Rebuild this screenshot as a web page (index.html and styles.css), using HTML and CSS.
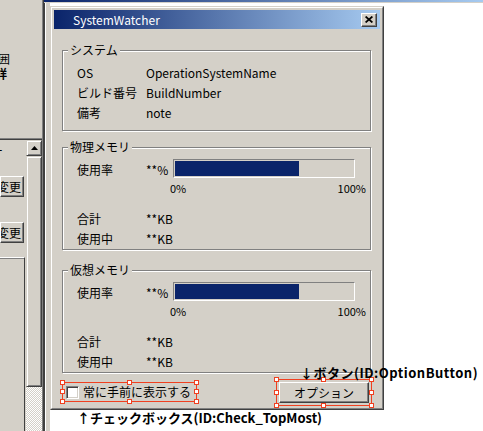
FILE: index.html
```html
<!DOCTYPE html>
<html lang="ja">
<head>
  <meta charset="UTF-8" />
  <title>SystemWatcher - フォームデザイナ</title>
  <link rel="stylesheet" href="styles.css">
</head>
<body>
  <div class="ide">

    <!-- 左のツールウィンドウ（切れている） -->
    <aside class="toolpane">
      <div class="tool-top">
        <div class="tool-glyph">囲</div>
        <div class="tool-glyph strong">詳</div>
      </div>
      <div class="tool-list">
        <div class="list-body">
          <div class="list-head">ー</div>
          <div class="mini-btn">変更</div>
          <div class="mini-btn second">変更</div>
          <div class="list-box"></div>
        </div>
        <div class="vscroll">
          <div class="vs-btn">
            <svg width="7" height="4" viewBox="0 0 7 4"><polygon points="3.5,0 7,4 0,4" fill="#000"/></svg>
          </div>
          <div class="vs-thumb"></div>
          <div class="vs-track"></div>
        </div>
      </div>
    </aside>

    <!-- フォームデザイナ -->
    <section class="designer">
      <div class="designer-caption"></div>
      <div class="designer-body">
        <div class="designer-edge"></div>
        <div class="canvas">

          <div class="dialog">
            <div class="dialog-inner">
              <div class="titlebar">
                <span class="title-text">SystemWatcher</span>
                <div class="close-btn">
                  <svg width="8" height="7" viewBox="0 0 8 7"><path d="M0.6 0.5 L7.4 6.5 M7.4 0.5 L0.6 6.5" stroke="#000" stroke-width="1.7" fill="none"/></svg>
                </div>
              </div>

              <div class="dialog-body">
                <div class="group group-sys">
                  <span class="caption">システム</span>
                  <div class="field"><span class="key">OS</span><span class="val">OperationSystemName</span></div>
                  <div class="field"><span class="key">ビルド番号</span><span class="val">BuildNumber</span></div>
                  <div class="field"><span class="key">備考</span><span class="val">note</span></div>
                </div>

                <div class="group group-mem group-phys">
                  <span class="caption">物理メモリ</span>
                  <div class="meter-row">
                    <span class="key">使用率</span>
                    <span class="val">**%</span>
                    <div class="bar"><div class="fill" style="width: 124px"></div></div>
                  </div>
                  <div class="scale"><span>0%</span><span>100%</span></div>
                  <div class="totals">
                    <div class="field"><span class="key">合計</span><span class="val">**KB</span></div>
                    <div class="field"><span class="key">使用中</span><span class="val">**KB</span></div>
                  </div>
                </div>

                <div class="group group-mem group-virt">
                  <span class="caption">仮想メモリ</span>
                  <div class="meter-row">
                    <span class="key">使用率</span>
                    <span class="val">**%</span>
                    <div class="bar"><div class="fill" style="width: 124px"></div></div>
                  </div>
                  <div class="scale"><span>0%</span><span>100%</span></div>
                  <div class="totals">
                    <div class="field"><span class="key">合計</span><span class="val">**KB</span></div>
                    <div class="field"><span class="key">使用中</span><span class="val">**KB</span></div>
                  </div>
                </div>

                <div class="actions">
                  <div class="check sel">
                    <span class="check-box"></span>
                    <span class="check-text">常に手前に表示する</span>
                    <div class="sel-frame">
                      <i class="h tl"></i><i class="h tc"></i><i class="h tr"></i>
                      <i class="h ml"></i><i class="h mr"></i>
                      <i class="h bl"></i><i class="h bc"></i><i class="h br"></i>
                    </div>
                  </div>
                  <div class="option sel">
                    <div class="btn">オプション</div>
                    <div class="sel-frame wide">
                      <i class="h tl"></i><i class="h tc"></i><i class="h tr"></i>
                      <i class="h ml"></i><i class="h mr"></i>
                      <i class="h bl"></i><i class="h bc"></i><i class="h br"></i>
                    </div>
                  </div>
                </div>
              </div>
            </div>
          </div>

          <div class="note note-btn">↓ボタン(ID:OptionButton)</div>
          <div class="note note-check">↑チェックボックス(ID:Check_TopMost)</div>
        </div>
      </div>
    </section>

  </div>
</body>
</html>
```

FILE: styles.css
```css
body {
  margin: 0;
  font-family: "Noto Sans CJK JP", sans-serif;
  font-size: 12px;
  color: #000;
  background-color: #fff;
}

.ide {
  display: flex;
  width: 483px;
  height: 431px;
  overflow: hidden;
}

/* ---- 左のツールウィンドウ ---- */

.toolpane {
  width: 44px;
  flex: none;
  box-sizing: border-box;
  border-right: 1px solid #404040;
  box-shadow: inset -1px 0 0 #808080;
  background-color: #d4d0c8;
  display: flex;
  flex-direction: column;
}

.tool-top {
  height: 138px;
  padding-top: 51px;
  box-sizing: border-box;
}

.tool-glyph {
  margin-left: -2px;
  line-height: 15px;
  font-size: 12px;
}

.tool-glyph.strong {
  margin-left: -5px;
  font-weight: bold;
}

.tool-list {
  flex: 1;
  display: flex;
  border-top: 1px solid #808080;
  box-shadow: inset 0 1px 0 #404040;
  overflow: hidden;
  width: 42px;
}

.list-body {
  width: 26px;
  display: flex;
  flex-direction: column;
  padding-top: 5px;
}

.list-head {
  margin-left: -9px;
  line-height: 14px;
}

.mini-btn {
  width: 24px;
  height: 21px;
  box-sizing: border-box;
  margin-top: 18px;
  border: 1px solid;
  border-color: #fff #404040 #404040 #fff;
  box-shadow: inset -1px -1px 0 #808080;
  display: flex;
  justify-content: flex-end;
  align-items: center;
  padding-right: 2px;
  overflow: hidden;
  white-space: nowrap;
  line-height: 16px;
}

.mini-btn.second {
  margin-top: 25px;
}

.list-box {
  flex: 1;
  width: 25px;
  margin-top: 14px;
  box-sizing: border-box;
  border-top: 1px solid #fff;
  border-right: 1px solid #404040;
  box-shadow: inset 0 1px 0 #808080;
}

.vscroll {
  width: 16px;
  display: flex;
  flex-direction: column;
  padding-top: 1px;
}

.vs-btn,
.vs-thumb {
  box-sizing: border-box;
  border: 1px solid;
  border-color: #d4d0c8 #404040 #404040 #d4d0c8;
  box-shadow: inset 1px 1px 0 #fff, inset -1px -1px 0 #808080;
  background-color: #d4d0c8;
}

.vs-btn {
  height: 16px;
  display: flex;
  align-items: center;
  justify-content: center;
}

.vs-thumb {
  flex: 1;
}

.vs-track {
  height: 44px;
  background: repeating-conic-gradient(#fff 0 25%, #d4d0c8 0 50%) 0 0 / 2px 2px;
}

/* ---- フォームデザイナ ---- */

.designer {
  flex: 1;
  display: flex;
  flex-direction: column;
}

.designer-caption {
  height: 2px;
  border-bottom: 1px solid #d4d0c8;
  background: linear-gradient(to right, #0a246a, #a6caf0);
}

.designer-body {
  flex: 1;
  display: flex;
}

.designer-edge {
  width: 6px;
  box-sizing: border-box;
  border-left: 1px solid #404040;
  box-shadow: inset 1px 0 0 #fff;
  background-color: #d4d0c8;
}

.canvas {
  flex: 1;
  position: relative;
  background-color: #fff;
  padding-top: 3px;
}

/* ---- ダイアログ ---- */

.dialog {
  width: 334px;
  box-sizing: border-box;
  border: 1px solid;
  border-color: #d4d0c8 #404040 #404040 #d4d0c8;
  background-color: #d4d0c8;
}

.dialog-inner {
  border: 1px solid;
  border-color: #fff #808080 #808080 #fff;
  padding: 2px;
}

.titlebar {
  height: 19px;
  display: flex;
  align-items: center;
  padding-left: 19px;
  padding-right: 3px;
  background: linear-gradient(to right, #0a246a, #a6caf0);
  color: #fff;
}

.title-text {
  flex: 1;
  line-height: 16px;
  font-size: 12px;
}

.close-btn {
  width: 16px;
  height: 14px;
  box-sizing: border-box;
  border: 1px solid;
  border-color: #fff #404040 #404040 #fff;
  box-shadow: inset -1px -1px 0 #808080;
  background-color: #d4d0c8;
  display: flex;
  align-items: center;
  justify-content: center;
}

.dialog-body {
  padding: 21px 9px 3px 8px;
}

.group {
  position: relative;
  width: 309px;
  box-sizing: border-box;
  border: 1px solid #808080;
  box-shadow: 1px 1px 0 #fff, inset 1px 1px 0 #fff;
  padding: 12px 14px 7px;
}

.caption {
  position: absolute;
  top: -8px;
  left: 5px;
  padding: 0 2px;
  line-height: 14px;
  background-color: #d4d0c8;
}

.group-mem {
  padding: 11px 14px 0;
}

.group-phys {
  margin-top: 16px;
}

.group-virt {
  margin-top: 20px;
}

.field {
  display: flex;
  height: 20px;
  line-height: 20px;
}

.key {
  width: 69px;
  flex: none;
}

.val {
  flex: none;
}

.meter-row {
  display: flex;
  height: 19px;
}

.meter-row .key,
.meter-row .val {
  padding-top: 3px;
  line-height: 16px;
}

.meter-row .val {
  width: 27px;
}

.bar {
  width: 182px;
  height: 19px;
  box-sizing: border-box;
  border: 1px solid;
  border-color: #808080 #fff #fff #808080;
  padding: 1px;
}

.fill {
  height: 100%;
  background-color: #0a246a;
}

.scale {
  display: flex;
  justify-content: space-between;
  width: 196px;
  margin: 2px 0 0 93px;
  line-height: 16px;
  font-size: 11px;
}

.totals {
  margin-top: 13px;
}

.actions {
  display: flex;
  align-items: flex-start;
  margin-top: 9px;
}

.sel {
  position: relative;
}

.check {
  width: 135px;
  height: 20px;
  display: flex;
  align-items: center;
}

.check-box {
  width: 13px;
  height: 13px;
  box-sizing: border-box;
  margin-left: 4px;
  margin-right: 4px;
  border: 1px solid;
  border-color: #808080 #fff #fff #808080;
  box-shadow: inset 1px 1px 0 #404040, inset -1px -1px 0 #d4d0c8;
  background-color: #fff;
}

.check-text {
  line-height: 20px;
  white-space: nowrap;
}

.option {
  margin-left: auto;
  margin-right: 2px;
}

.btn {
  width: 90px;
  height: 21px;
  box-sizing: border-box;
  border: 1px solid;
  border-color: #fff #404040 #404040 #fff;
  box-shadow: inset -1px -1px 0 #808080;
  text-align: center;
  line-height: 19px;
}

.sel-frame {
  position: absolute;
  inset: 0;
  border: 1px solid #f04020;
}

.sel-frame.wide {
  inset: -3px -3px -3px -3px;
}

.h {
  position: absolute;
  width: 5px;
  height: 5px;
  box-sizing: border-box;
  border: 1px solid #f04020;
  background-color: #fff;
}

.tl { left: -3px; top: -3px; }
.tc { left: 50%; margin-left: -3px; top: -3px; }
.tr { right: -3px; top: -3px; }
.ml { left: -3px; top: 50%; margin-top: -3px; }
.mr { right: -3px; top: 50%; margin-top: -3px; }
.bl { left: -3px; bottom: -3px; }
.bc { left: 50%; margin-left: -3px; bottom: -3px; }
.br { right: -3px; bottom: -3px; }

/* ---- 注釈 ---- */

.note {
  position: absolute;
  font-weight: bold;
  font-size: 13px;
  line-height: 16px;
  white-space: nowrap;
}

.note-btn {
  left: 250px;
  top: 362px;
  letter-spacing: 0.5px;
}

.note-check {
  left: 27px;
  top: 407px;
}
```
